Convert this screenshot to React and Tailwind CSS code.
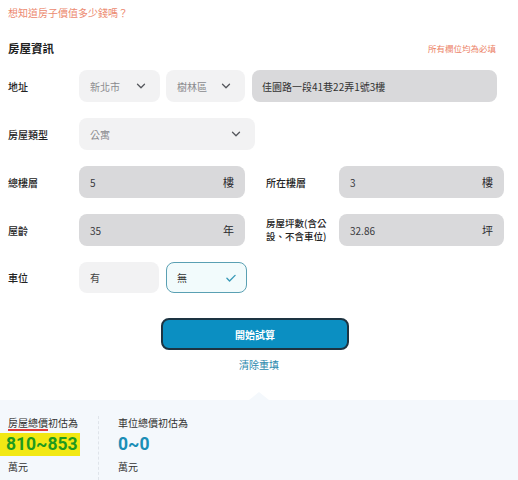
import React from "react";

const font = { fontFamily: '"Noto Sans CJK TC", "Noto Sans", sans-serif' };

const Chevron = ({ className = "" }) => (
  <svg viewBox="0 0 24 24" className={className} fill="none" stroke="currentColor" strokeWidth="2.2" strokeLinecap="round" strokeLinejoin="round">
    <path d="M6 9l6 6 6-6" />
  </svg>
);

const Select = ({ value, className }) => (
  <div className={`h-8 rounded-lg bg-[#f2f2f3] flex items-center justify-between pl-[11px] pr-3 text-[10px] text-[#8a8a8e] ${className}`}>
    <span>{value}</span>
    <Chevron className="w-3.5 h-3.5 text-[#55575c]" />
  </div>
);

const Field = ({ value, unit, className }) => (
  <div className={`h-8 rounded-lg bg-[#d9d9db] flex items-center justify-between pl-[11px] pr-[11px] text-[10px] text-[#3a3a3e] ${className}`}>
    <span>{value}</span>
    <span className="text-[11px] text-[#2a2a2e]">{unit}</span>
  </div>
);

const Label = ({ children, className = "w-[71px] text-[10px]" }) => (
  <div className={`shrink-0 font-medium text-[#222] leading-[13px] ${className}`}>{children}</div>
);

export default function App() {
  return (
    <div className="w-[518px] h-[480px] bg-white overflow-hidden flex flex-col" style={font}>
      <div className="px-2 pt-[6px]">
        <p className="text-[10px] text-[#ec8a70] leading-[14px]">想知道房子價值多少錢嗎？</p>

        <div className="mt-[20px] flex items-center justify-between pr-[14px]">
          <h2 className="text-[11.5px] font-bold text-[#222]">房屋資訊</h2>
          <span className="text-[8.5px] text-[#ec7f66]">所有欄位均為必填</span>
        </div>

        <div className="mt-[13px] flex flex-col gap-4">
          <div className="flex items-center">
            <Label>地址</Label>
            <Select value="新北市" className="w-[81px]" />
            <Select value="樹林區" className="w-[79px] ml-[6px]" />
            <div className="ml-[7px] w-[245px] h-8 rounded-lg bg-[#d9d9db] flex items-center px-[10px] text-[10px] text-[#333]">
              佳園路一段41巷22弄1號3樓
            </div>
          </div>

          <div className="flex items-center">
            <Label>房屋類型</Label>
            <Select value="公寓" className="w-[176px]" />
          </div>

          <div className="flex items-center">
            <Label>總樓層</Label>
            <Field value="5" unit="樓" className="w-[166px]" />
            <Label className="w-[73px] ml-[21px] text-[10px]">所在樓層</Label>
            <Field value="3" unit="樓" className="w-[165px]" />
          </div>

          <div className="flex items-center">
            <Label>屋齡</Label>
            <Field value="35" unit="年" className="w-[166px]" />
            <Label className="w-[73px] ml-[21px] text-[9.5px] whitespace-nowrap">
              房屋坪數(含公
              <br />
              設、不含車位)
            </Label>
            <Field value="32.86" unit="坪" className="w-[165px]" />
          </div>

          <div className="flex items-center">
            <Label>車位</Label>
            <div className="w-[80px] h-[31px] rounded-lg bg-[#f2f2f3] flex items-center pl-[11px] text-[10px] text-[#444]">有</div>
            <div className="ml-[7px] w-[81px] h-[31px] rounded-lg border border-[#5aa0b3] bg-[#f2fbfc] flex items-center justify-between pl-[10px] pr-[8px] text-[10px] text-[#333]">
              <span>無</span>
              <svg viewBox="0 0 24 24" className="w-3.5 h-3.5 text-[#3a9ab8]" fill="none" stroke="currentColor" strokeWidth="2.4" strokeLinecap="round" strokeLinejoin="round">
                <path d="M5 12.5l4.5 4.5L19 7.5" />
              </svg>
            </div>
          </div>
        </div>

        <div className="mt-[25px] flex flex-col items-center">
          <button className="ml-[-8px] w-[188px] h-[32px] rounded-lg bg-[#0b8fc2] border-2 border-[#1d3442] text-white text-[10px] font-bold">
            開始試算
          </button>
          <span className="mt-[7px] text-[10px] text-[#2b88ad]">清除重填</span>
        </div>
      </div>

      <div className="flex justify-center mt-[20px]">
        <div className="w-0 h-0 border-l-[10px] border-r-[10px] border-b-[8px] border-l-transparent border-r-transparent border-b-[#f4f8fc]" />
      </div>
      <div className="flex-1 bg-[#f4f8fc] flex pt-[16px]">
        <div className="w-[98px] pl-2 flex flex-col">
          <span className="text-[10px] text-[#333] leading-[14px]">
            <span className="underline decoration-[#e03a3a] decoration-[1.5px] underline-offset-[2px]">房屋總價</span>初估為
          </span>
          <span className="mt-[3px] -ml-2 pl-[6px] w-[80px] bg-[#f2e814] text-[17.5px] font-bold text-[#1f9a1f] leading-[23px]" style={{ fontFamily: "Roboto, sans-serif" }}>
            810~853
          </span>
          <span className="mt-[3px] text-[10px] text-[#333]">萬元</span>
        </div>
        <div className="border-l border-dashed border-[#dfe4ea] h-[64px]" />
        <div className="pl-[19px] flex flex-col">
          <span className="text-[10px] text-[#333] leading-[14px]">車位總價初估為</span>
          <span className="mt-[3px] text-[17.5px] font-bold text-[#1b8eb6] leading-[23px]" style={{ fontFamily: "Roboto, sans-serif" }}>
            0~0
          </span>
          <span className="mt-[3px] text-[10px] text-[#333]">萬元</span>
        </div>
      </div>
    </div>
  );
}
